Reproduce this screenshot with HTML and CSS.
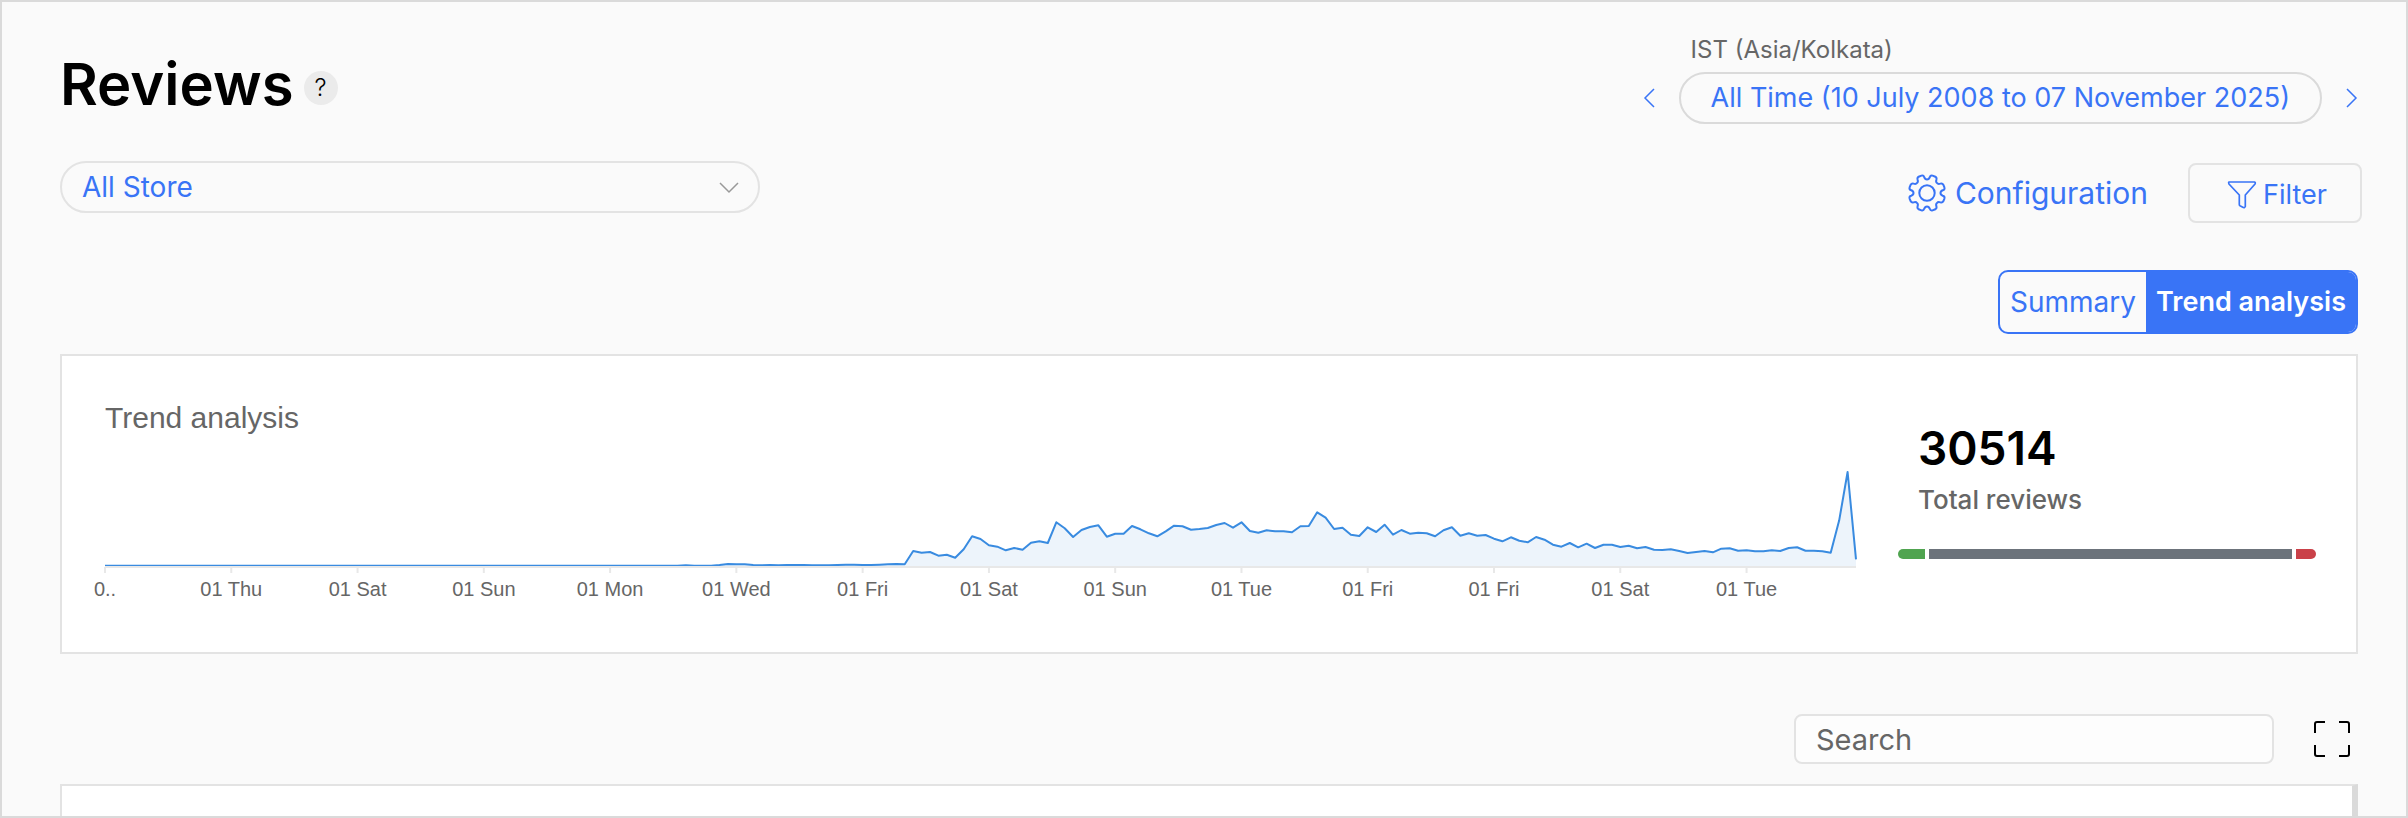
FILE: index.html
```html
<!doctype html>
<html lang="en">
<head>
	<meta charset="utf-8">
	<title>Reviews</title>
	<meta name="viewport" content="width=device-width, initial-scale=1">
	<link rel="stylesheet" href="styles.css">
</head>
<body>

	<main class="page">
		<header class="page-header">
			<div class="title">
				<h1>Reviews</h1>
				<button class="help" type="button">?</button>
			</div>

			<div class="period">
				<span class="timezone">IST (Asia/Kolkata)</span>
				<div class="period-picker">
					<button class="arrow" type="button" aria-label="Previous period">
						<svg width="12" height="20" viewBox="0 0 12 20"><path stroke-width="1.5" d="M11 1L2 10l9 9"/></svg>
					</button>
					<button class="range" type="button">All Time (10 July 2008 to 07 November 2025)</button>
					<button class="arrow" type="button" aria-label="Next period">
						<svg width="12" height="20" viewBox="0 0 12 20"><path stroke-width="1.5" d="M1 1l9 9-9 9"/></svg>
					</button>
				</div>
			</div>
		</header>

		<div class="toolbar">
			<div class="store">
				<select class="store-select" aria-label="Store">
					<option>All Store</option>
				</select>
				<svg class="store-arrow" width="20" height="12" viewBox="0 0 20 12"><path stroke-width="1.5" d="M1 1l9 9 9-9"/></svg>
			</div>

			<div class="actions">
				<a class="configuration" href="#">
					<svg width="40" height="40" viewBox="0 0 40 40">
						<defs>
							<path id="teeth" d="M20 6.5Q22 6.5 22.8 4.2 23.4 2 25.6 2.6L28.3 3.7Q30 4.6 29.4 6.6 28.6 9 30 10 31 11.4 33.4 10.6 35.4 10 36.3 11.7L37.4 14.4Q38 16.6 35.8 17.2 33.5 18 33.5 20"/>
						</defs>
						<use href="#teeth"/>
						<use href="#teeth" transform="rotate(90 20 20)"/>
						<use href="#teeth" transform="rotate(180 20 20)"/>
						<use href="#teeth" transform="rotate(270 20 20)"/>
						<circle cx="20" cy="20" r="7.7"/>
					</svg>
					Configuration
				</a>
				<button class="filter" type="button">
					<svg width="30" height="30" viewBox="0 0 30 30"><path stroke-width="1.7" d="M2 2H27.500Q28.800 2.600 28 4L18.300 15V26.500Q17.500 28.300 15.800 27.300L13 25.800Q12.300 25.400 12.300 24.500V15L2 4Q1.200 2.600 2 2z"/></svg>
					Filter
				</button>
			</div>
		</div>

		<div class="tabs">
			<button class="tab" type="button">Summary</button>
			<button class="tab active" type="button">Trend analysis</button>
		</div>

		<section class="card trend">
			<div class="trend-chart">
				<h2>Trend analysis</h2>
				<svg id="chart" class="chart"></svg>
			</div>
			<div class="total">
				<strong class="total-count">30514</strong>
				<span class="total-label">Total reviews</span>
				<div class="split">
					<div class="positive"></div>
					<div class="neutral"></div>
					<div class="negative"></div>
				</div>
			</div>
		</section>

		<div class="search-row">
			<input class="search" type="text" placeholder="Search" aria-label="Search">
			<button class="fullscreen" type="button" aria-label="Full screen">
				<svg width="38" height="38" viewBox="0 0 38 38"><path d="M2 13V4q0-2 2-2h8M26 2h8q2 0 2 2v9M36 25v9q0 2-2 2h-8M12 36H4q-2 0-2-2V25"/></svg>
			</button>
		</div>

		<section class="card list"></section>
	</main>

	<script src="chart.js"></script>
</body>
</html>
```
FILE: styles.css
```css
* {
	box-sizing: border-box;
}
body {
	margin: 0;
	background-color: #fafafa;
	color: #000;
	font-family: Inter, "Liberation Sans", sans-serif;
	font-size: 28px;
	line-height: 36px;
}
h1, h2 {
	margin: 0;
}
button, select, input {
	margin: 0;
	padding: 0;
	border: 0;
	background: none;
	color: inherit;
	font: inherit;
}
button, select {
	cursor: pointer;
}
svg {
	display: block;
	flex: none;
	fill: none;
	stroke: currentColor;
	stroke-width: 2;
}
.page {
	display: flex;
	flex-direction: column;
	height: 100vh;
	min-height: 818px;
	padding: 32px 48px 0 58px;
	border: 2px solid #dadada;
	overflow: hidden;
}

/* header */
.page-header {
	display: flex;
	justify-content: space-between;
	align-items: flex-start;
}
.title {
	display: flex;
	align-items: center;
	gap: 10px;
	padding-top: 14px;
}
h1 {
	font-size: 58px;
	line-height: 72px;
	font-weight: 600;
}
.help {
	width: 34px;
	height: 34px;
	margin-top: 8px;
	border-radius: 50%;
	background-color: #ebebeb;
	font-size: 24px;
	line-height: 34px;
	font-weight: 300;
	text-align: center;
}
.timezone {
	display: block;
	margin-left: 48px;
	color: #666;
	font-size: 24px;
	line-height: 32px;
	margin-bottom: 6px;
}
.period-picker {
	display: flex;
	align-items: center;
	gap: 24px;
}
.arrow {
	color: #3974f6;
}
.range {
	height: 52px;
	padding: 0 30px;
	border: 2px solid #dadada;
	border-radius: 26px;
	color: #3974f6;
	font-size: 27px;
}

/* store, configuration and filter */
.toolbar {
	display: flex;
	justify-content: space-between;
	align-items: flex-start;
	margin-top: 37px;
}
.store {
	position: relative;
	width: 700px;
}
.store-select {
	display: block;
	width: 100%;
	height: 52px;
	padding: 0 60px 0 20px;
	border: 2px solid #e3e3e3;
	border-radius: 26px;
	color: #3974f6;
	appearance: none;
}
.store-arrow {
	position: absolute;
	top: 21px;
	right: 21px;
	color: #999;
	pointer-events: none;
}
.actions {
	display: flex;
	align-items: center;
	gap: 40px;
	margin: 2px -4px 0 0;
}
.configuration {
	display: flex;
	align-items: center;
	gap: 8px;
	color: #3974f6;
	font-size: 30px;
	text-decoration: none;
}
.filter {
	display: flex;
	align-items: center;
	justify-content: center;
	gap: 6px;
	width: 174px;
	height: 60px;
	padding: 4px 0 0 4px;
	border: 2px solid #e3e3e3;
	border-radius: 8px;
	color: #3974f6;
	font-size: 27px;
}

/* tabs */
.tabs {
	display: flex;
	align-self: flex-end;
	margin-top: 47px;
	border: 2px solid #3974f6;
	border-radius: 10px;
	overflow: hidden;
}
.tab {
	height: 60px;
	padding: 0 10px;
	color: #3974f6;
}
.tab.active {
	background-color: #3974f6;
	color: #fff;
	font-size: 27px;
	font-weight: 600;
}

/* cards */
.card {
	border: 2px solid #e3e3e3;
	background-color: #fff;
}
.trend {
	display: flex;
	gap: 42px;
	height: 300px;
	margin-top: 20px;
	padding: 42px 40px 0 43px;
}
.trend-chart {
	flex: 1;
	min-width: 0;
}
h2 {
	color: #666;
	font-family: "Liberation Sans", sans-serif;
	font-size: 30px;
	line-height: 40px;
	font-weight: 400;
}
.chart {
	width: 100%;
	height: 180px;
	overflow: visible;
}
.chart .area {
	fill: #edf4fb;
	stroke: none;
}
.chart .line {
	stroke: #398be0;
	stroke-linejoin: round;
}
.chart .axis {
	stroke: #e8e8e8;
}
.chart text {
	fill: #666;
	stroke: none;
	font-family: "Liberation Sans", sans-serif;
	font-size: 20px;
	text-anchor: middle;
}
.total {
	display: flex;
	flex-direction: column;
	width: 418px;
	padding-top: 22px;
}
.total-count {
	padding-left: 20px;
	font-size: 46px;
	line-height: 56px;
	font-weight: 600;
}
.total-label {
	padding-left: 20px;
	color: #666;
	font-size: 26px;
	font-weight: 500;
	line-height: 36px;
	margin-top: 6px;
}
.split {
	display: flex;
	gap: 4px;
	height: 10px;
	margin-top: 31px;
}
.positive {
	flex: 27;
	border-radius: 5px 0 0 5px;
	background-color: #50a450;
}
.neutral {
	flex: 363;
	background-color: #6c737b;
}
.negative {
	flex: 20;
	border-radius: 0 5px 5px 0;
	background-color: #ca4149;
}

/* search */
.search-row {
	display: flex;
	justify-content: flex-end;
	align-items: center;
	gap: 39px;
	margin-top: 60px;
	padding-right: 7px;
}
.search {
	width: 480px;
	height: 50px;
	padding: 0 20px;
	border: 2px solid #e3e3e3;
	border-radius: 8px;
	background-color: #fdfdfd;
	font-size: 29px;
}
.search::placeholder {
	color: #666;
	opacity: 1;
}
.list {
	flex: 1;
	margin-top: 20px;
	border-right: 6px solid #dadada;
	border-bottom: 0;
}
```
FILE: chart.js
```js
const FLAT = 4;
const STEP = 15;
const BASE = 129;
const labels = ['0..', '01 Thu', '01 Sat', '01 Sun', '01 Mon', '01 Wed', '01 Fri', '01 Sat', '01 Sun', '01 Tue', '01 Fri', '01 Fri', '01 Sat', '01 Tue'];

// Monthly values, the first years are almost empty
const values = new Array(69).fill(FLAT).concat([
	5, 4, 4, 4, 6, 9, 8, 8, 6, 5, 6, 5, 6, 6, 6, 5, 5, 5, 6, 7, 7, 6, 6, 7, 8, 9, 8,
	48, 43, 45, 34, 37, 28, 53, 92, 84, 65, 61, 50, 57, 52, 73, 77, 72, 134, 116, 90,
	111, 120, 125, 91, 100, 100, 123, 113, 101, 92, 107, 124, 122, 112, 114, 117, 126,
	132, 118, 134, 108, 103, 110, 107, 107, 104, 122, 123, 164, 148, 114, 118, 97, 93,
	119, 105, 127, 97, 111, 100, 103, 101, 92, 110, 119, 94, 101, 94, 96, 85, 77, 89,
	79, 74, 90, 82, 67, 61, 72, 59, 70, 57, 67, 67, 60, 64, 56, 60, 52, 51, 53, 48, 42,
	45, 48, 44, 55, 56, 49, 50, 47, 47, 50, 48, 57, 59, 49, 49, 47, 43, 140, 285, 23
]);

const draw = () => {
	const chart = document.getElementById('chart');
	const width = chart.parentNode.clientWidth;
	const step = width / (values.length - 1);
	const points = values.map((value, i) => (i * step).toFixed(1) + ',' + (BASE - value / 3).toFixed(1)).join(' ');

	let out = `<polygon class="area" points="0,${BASE} ${points} ${width},${BASE}"/>`;
	out += `<polyline class="line" points="${points}"/>`;
	out += `<path class="axis" d="M0 ${BASE}H${width}"/>`;

	labels.forEach((label, i) => {
		const x = i * STEP * step;

		out += `<path class="axis" d="M${x} ${BASE}v6"/><text x="${x}" y="${BASE + 29}">${label}</text>`;
	});

	chart.innerHTML = out;
};

draw();
window.addEventListener('resize', draw);
```
